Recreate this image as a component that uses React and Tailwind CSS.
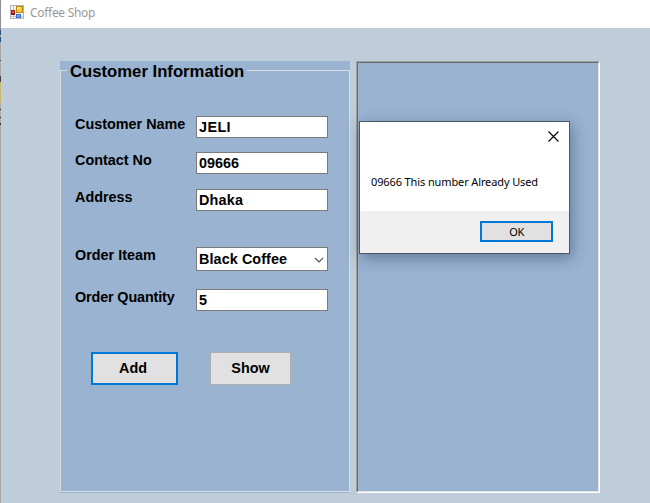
function AppIcon() {
  return (
    <svg width="14" height="14" viewBox="0 0 14 14" shapeRendering="crispEdges" className="block">
      <rect x="0.5" y="0.5" width="13" height="13" fill="#f4f4f4" stroke="#b4b4b4" />
      <path d="M3.5 1v12M1 11.5h12" stroke="#c8c8c8" />
      <rect x="1" y="5" width="4" height="5" fill="#a31414" />
      <rect x="2" y="6" width="2" height="2" fill="#e0605c" />
      <rect x="6" y="1" width="7" height="7" fill="#b98a10" />
      <rect x="7" y="2" width="5" height="5" fill="#fbc934" />
      <rect x="7" y="2" width="3" height="2" fill="#fde48a" />
      <rect x="6" y="9" width="5" height="4" fill="#3c6fd0" />
      <rect x="7" y="10" width="3" height="2" fill="#78a5f0" />
    </svg>
  );
}

function Field({ label, value, className, labelClass = "", valueClass = "", select }) {
  return (
    <div className={`flex items-start ${className}`}>
      <div className={`-mt-px w-[121px] shrink-0 whitespace-nowrap text-[14.4px] leading-[18px] ${labelClass}`}>{label}</div>
      <div
        className={`flex w-[132px] items-center justify-between border border-[#7a7a7a] bg-white pl-[2px] text-[14.4px] leading-[18px] ${
          select ? "h-6 pb-px" : "h-[22px]"
        }`}
      >
        <span className={`whitespace-nowrap ${valueClass}`}>{value}</span>
        {select && (
          <svg width="10" height="6" viewBox="0 0 10 6" className="mr-[3px] mt-[3px]" fill="none" stroke="#555" strokeWidth="1.1">
            <path d="M1 1l4 4 4-4" />
          </svg>
        )}
      </div>
    </div>
  );
}

function MessageBox() {
  return (
    <div className="absolute left-[1px] top-[58px] flex h-[133px] w-[211px] flex-col border border-[#4b5666] bg-white font-['Noto_Sans',sans-serif] text-[11px] font-normal shadow-[2px_4px_14px_0px_rgba(20,40,70,0.42)]">
      <div className="flex justify-end pr-[10px] pt-[9px]">
        <svg width="11" height="11" viewBox="0 0 11 11" stroke="#000" strokeWidth="1.1">
          <path d="M0.5 0.5l10 10M10.5 0.5l-10 10" />
        </svg>
      </div>
      <p className="mt-[32px] whitespace-nowrap pl-[11px] leading-4 tracking-[-0.12px]">09666 This number Already Used</p>
      <div className="mt-auto flex h-[42px] justify-end bg-[#f0f0f0] pr-4 pt-[10px]">
        <button className="h-[21px] w-[73px] border-2 border-[#0078d7] bg-[#e1e1e1] leading-4 tracking-[-0.4px]">OK</button>
      </div>
    </div>
  );
}

export default function App() {
  return (
    <div className="flex h-[503px] w-[650px] overflow-hidden bg-[#bfccd9] font-['Liberation_Sans',Arial,sans-serif]">
      <div className="flex w-px shrink-0 flex-col bg-[#a8a8a8]">
        <div className="h-[30px] bg-[#8e8e96]" />
        <div className="h-[5px] bg-[#285582]" />
        <div className="h-[2px]" />
        <div className="h-[5px] bg-[#285582]" />
        <div className="h-[18px]" />
        <div className="h-px bg-[#3d3d78]" />
        <div className="h-[15px]" />
        <div className="h-[6px] bg-[#45424f]" />
        <div className="h-[21px] bg-[#c8b766]" />
        <div className="h-[6px]" />
        <div className="h-px bg-[#222]" />
        <div className="h-[7px]" />
        <div className="h-px bg-[#222]" />
        <div className="h-[5px]" />
        <div className="h-[2px] bg-[#333]" />
      </div>
      <div className="flex grow flex-col">
        <header className="flex h-7 items-start bg-white pl-[9px] pt-[5px]">
          <AppIcon />
          <span className="ml-[6px] whitespace-nowrap font-['Noto_Sans',sans-serif] text-[12px] leading-4 tracking-[-0.3px] text-[#999]">Coffee Shop</span>
        </header>
        <main className="flex pl-[59px] pt-[33px] font-bold text-black">
          <section className="h-[432px] w-[290px] bg-[#99b3d1]">
            <fieldset className="h-[431px] border border-[#dcdcdc] pl-[14px]">
              <legend className="-ml-[8px] whitespace-nowrap pl-[3px] pr-[3px] text-[16.7px] leading-[18px]">
                <span className="relative top-[2px]">Customer Information</span>
              </legend>
              <Field label="Customer Name" value="JELI" className="mt-[37px]" valueClass="tracking-[0.4px]" />
              <Field label="Contact No" value="09666" className="mt-[14px]" />
              <Field label="Address" value="Dhaka" className="mt-[15px]" valueClass="tracking-[0.2px]" />
              <Field label="Order Iteam" value="Black Coffee" className="mt-[36px]" valueClass="tracking-[0.08px]" select />
              <Field label="Order Quantity" value="5" className="mt-[18px]" labelClass="tracking-[-0.14px]" />
              <div className="mt-[41px] flex pl-4 text-[14.4px]">
                <button className="h-[33px] w-[87px] border-2 border-[#0078d7] bg-[#e1e1e1] pr-[3px]">Add</button>
                <button className="ml-8 h-[33px] w-[81px] border border-[#adadad] bg-[#e1e1e1]">Show</button>
              </div>
            </fieldset>
          </section>
          <section className="ml-[6px] h-[432px] w-[244px] border border-b-white border-l-[#a0a0a0] border-r-white border-t-[#a0a0a0]">
            <div className="relative h-full border border-b-[#e3e3e3] border-l-[#696969] border-r-[#e3e3e3] border-t-[#696969] bg-[#99b3d1]">
              <MessageBox />
            </div>
          </section>
        </main>
      </div>
    </div>
  );
}
